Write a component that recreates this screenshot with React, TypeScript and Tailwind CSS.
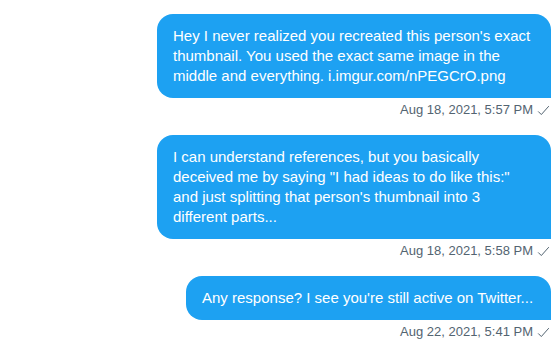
import React from 'react';

const messages = [
  {
    text: "Hey I never realized you recreated this person's exact thumbnail. You used the exact same image in the middle and everything. i.imgur.com/nPEGCrO.png",
    time: 'Aug 18, 2021, 5:57 PM',
    width: 'w-[394px]',
  },
  {
    text: 'I can understand references, but you basically deceived me by saying "I had ideas to do like this:" and just splitting that person\'s thumbnail into 3 different parts...',
    time: 'Aug 18, 2021, 5:58 PM',
    width: 'w-[394px]',
  },
  {
    text: "Any response? I see you're still active on Twitter...",
    time: 'Aug 22, 2021, 5:41 PM',
    width: 'w-[365px]',
  },
];

const Check = () => (
  <svg viewBox="0 0 24 24" className="h-[15px] w-[15px]" fill="none" stroke="currentColor" strokeWidth={1.6}>
    <path d="M3.5 13.5l5 5L20.5 5" />
  </svg>
);

export default function App() {
  return (
    <div
      className="min-h-screen bg-white pr-[3px] pt-[14px]"
      style={{ fontFamily: '"Liberation Sans", Arial, sans-serif' }}
    >
      <div className="flex flex-col items-end gap-[17px]">
        {messages.map((m) => (
          <div key={m.time} className="flex flex-col items-end">
            <div
              className={`${m.width} rounded-2xl rounded-br-none bg-[#1da1f2] px-4 py-3 text-[15px] leading-5 text-white`}
            >
              {m.text}
            </div>
            <div className="mt-[4px] flex items-center gap-[3px] text-[13px] leading-4 text-[#536471]">
              <span>{m.time}</span>
              <Check />
            </div>
          </div>
        ))}
      </div>
    </div>
  );
}
